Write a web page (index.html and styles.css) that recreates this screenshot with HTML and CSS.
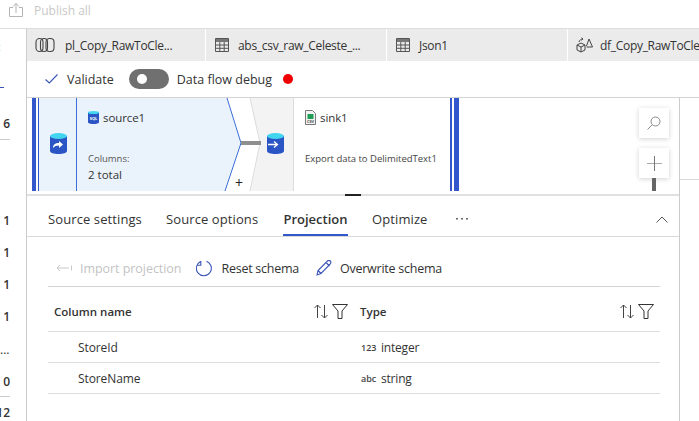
FILE: index.html
```html
<!DOCTYPE html>
<html lang="en">
<head>
<meta charset="UTF-8" />
<meta name="viewport" content="width=device-width, initial-scale=1.0" />
<title>Data flow</title>
<link rel="stylesheet" href="styles.css">
</head>
<body>

<header class="topbar">
  <svg class="publish-icon" width="16" height="16" viewBox="0 0 16 16" fill="none" stroke="#b5b5b5">
    <path d="M5 5.500H1.500v9h13v-9H11M8 11V1.500M5 4.500l3-3 3 3"/>
  </svg>
  <span class="publish-label">Publish all</span>
</header>

<div class="layout">
  <aside class="rail">
    <div class="rail-x">×</div>
    <div class="rail-dash"><i></i></div>
    <div class="rail-six">6</div>
    <div class="rail-gap"></div>
    <div class="rail-num">1</div>
    <div class="rail-num">1</div>
    <div class="rail-num">1</div>
    <div class="rail-num">1</div>
    <div class="rail-dots">...</div>
    <div class="rail-zero">0</div>
    <div class="rail-num rail-cut">12</div>
  </aside>

  <div class="main">
    <nav class="tabs">
      <div class="tab tab-first">
        <svg class="tab-icon" width="20" height="16" viewBox="0 0 20 16" fill="none" stroke="#444" stroke-width="1.100">
          <rect x="1" y="1.500" width="7" height="13" rx="3.500"/>
          <rect x="5.500" y="1.500" width="7" height="13" rx="3.500"/>
          <rect x="11" y="1.500" width="8" height="13" rx="3.500"/>
        </svg>
        <span>pl_Copy_RawToCle...</span>
      </div>
      <div class="tab">
        <svg class="tab-icon" width="14" height="14" viewBox="0 0 14 14" fill="none" stroke="#555">
          <path d="M.5.500h13v13H.5z"/>
          <path fill="#777" stroke="none" d="M1 1h12v3H1z"/>
          <path d="M.5 7h13M.5 10.300h13M4.800 4v9.500M9.200 4v9.500"/>
        </svg>
        <span>abs_csv_raw_Celeste_...</span>
      </div>
      <div class="tab">
        <svg class="tab-icon" width="14" height="14" viewBox="0 0 14 14" fill="none" stroke="#555">
          <path d="M.5.500h13v13H.5z"/>
          <path fill="#777" stroke="none" d="M1 1h12v3H1z"/>
          <path d="M.5 7h13M.5 10.300h13M4.800 4v9.500M9.200 4v9.500"/>
        </svg>
        <span>Json1</span>
      </div>
      <div class="tab tab-last">
        <svg class="tab-icon" width="17" height="16" viewBox="0 0 17 16" fill="none" stroke="#444">
          <path d="M1 8l4-2 4 2v5l-4 2-4-2zM1 8l4 2 4-2M5 10v5"/>
          <path d="M10.500 9L13 2l3.500 8h-6"/>
          <path d="M3 5c.5-2 2-3 4-3M7 2L5.500.8M7 2L5.500 3.300"/>
        </svg>
        <span>df_Copy_RawToCle...</span>
      </div>
    </nav>

    <div class="toolbar">
      <svg class="check-icon" width="13" height="10" viewBox="0 0 13 10" fill="none" stroke="#3a54b8" stroke-width="1.100">
        <path d="M.5 5.500L4.300 9 12.500.5"/>
      </svg>
      <span class="validate-label">Validate</span>
      <span class="toggle"><i></i></span>
      <span>Data flow debug</span>
      <span class="red-dot"></span>
    </div>

    <div class="workspace">
      <div class="center">
        <section class="canvas">
          <svg class="canvas-bg" width="652" height="93" viewBox="0 0 652 93">
            <rect x="5" y="0" width="4" height="93" fill="#3358cc"/>
            <rect x="11" y="0" width="1" height="93" fill="#3358cc"/>
            <path d="M12 0H200L214 45 198 93H12z" fill="#eaf2fb"/>
            <path d="M200 0L214 45 198 93" fill="none" stroke="#3b6fd8" stroke-width="1"/>
            <rect x="49" y="0" width="1" height="93" fill="#3b6fd8"/>
            <path d="M223 0H266V93H223L233 45z" fill="#f3f3f3"/>
            <path d="M223 0L233 45 223 93" fill="none" stroke="#dcdcdc" stroke-width="1"/>
            <rect x="214" y="43" width="20" height="4" fill="#8f8f8f"/>
            <rect x="266" y="0" width="1" height="93" fill="#dcdcdc"/>
            <rect x="423" y="0" width="2" height="93" fill="#3358cc"/>
            <rect x="427" y="0" width="5" height="93" fill="#3358cc"/>
          </svg>

          <svg class="node-icon source-icon" width="17" height="21" viewBox="0 0 17 21">
            <path d="M0 3v15c0 1.700 3.800 3 8.500 3S17 19.700 17 18V3z" fill="#2b55c4"/>
            <ellipse cx="8.500" cy="3" rx="8.500" ry="3" fill="#41d5f0"/>
            <path d="M3 15c0-3.500 2-5 6-5V8l4 3.500L9 15v-2.500c-3 0-4.500.800-6 2.500z" fill="#fff"/>
          </svg>
          <svg class="node-icon sink-icon" width="17" height="21" viewBox="0 0 17 21">
            <path d="M0 3v15c0 1.700 3.800 3 8.500 3S17 19.700 17 18V3z" fill="#2b55c4"/>
            <ellipse cx="8.500" cy="3" rx="8.500" ry="3" fill="#41d5f0"/>
            <path d="M1 11.500h9M7 8.500l3.500 3-3.500 3" fill="none" stroke="#fff" stroke-width="1.300"/>
          </svg>

          <div class="node source-node">
            <div class="node-title">
              <svg width="11" height="13" viewBox="0 0 11 13">
                <path d="M0 1.500v10c0 .800 2.500 1.500 5.500 1.500s5.500-.700 5.500-1.500v-10z" fill="#2b55c4"/>
                <ellipse cx="5.500" cy="1.500" rx="5.500" ry="1.500" fill="#41d5f0"/>
                <text x="5.500" y="8.500" class="tiny-mark" fill="#fff">SQL</text>
              </svg>
              <span>source1</span>
            </div>
            <div class="node-sub">Columns:</div>
            <div class="node-total">2 total</div>
          </div>
          <span class="add-btn">+</span>

          <div class="node sink-node">
            <div class="node-title">
              <svg width="11" height="15" viewBox="0 0 11 15">
                <path d="M.5.500h7l3 3v11H.5z" fill="#f2f2f2" stroke="#777"/>
                <rect x="2.500" y="4" width="6" height="5" fill="#1f9d55"/>
                <text x="5.500" y="13" class="tiny-mark" fill="#555">CSV</text>
              </svg>
              <span>sink1</span>
            </div>
            <div class="node-sub">Export data to DelimitedText1</div>
          </div>

          <button class="zoom-btn search-btn">
            <svg width="14" height="14" viewBox="0 0 14 14" fill="none" stroke="#888">
              <circle cx="8.500" cy="5.500" r="4.500"/>
              <path d="M5.300 8.700L.5 13.500"/>
            </svg>
          </button>
          <button class="zoom-btn plus-btn">
            <svg width="15" height="15" viewBox="0 0 15 15">
              <path d="M0 7.500h15" stroke="#aaa"/>
              <path d="M7.500 0v15" stroke="#777"/>
            </svg>
          </button>
          <span class="slider-bar"></span>
        </section>

        <div class="sash"><i></i></div>

        <div class="panel-tabs">
          <span class="panel-tab t1">Source settings</span>
          <span class="panel-tab t2">Source options</span>
          <span class="panel-tab active">Projection</span>
          <span class="panel-tab t4">Optimize</span>
          <svg class="panel-more" width="12" height="2" viewBox="0 0 12 2" fill="#666">
            <rect x="0" y="0" width="2" height="1.500"/>
            <rect x="5" y="0" width="2" height="1.500"/>
            <rect x="10" y="0" width="2" height="1.500"/>
          </svg>
          <svg class="collapse" width="12" height="7" viewBox="0 0 12 7" fill="none" stroke="#555">
            <path d="M.5 6.500L6 1l5.500 5.500"/>
          </svg>
        </div>

        <div class="content">
          <div class="actions">
            <span class="action disabled">
              <svg width="16" height="8" viewBox="0 0 16 8" fill="none" stroke="#c8c8c8">
                <path d="M13 4H1M4 1L1 4l3 3M15.500 1.500v5"/>
              </svg>
              Import projection
            </span>
            <span class="action">
              <svg width="17" height="17" viewBox="0 0 17 17" fill="none" stroke="#3a54b8" stroke-width="1.100">
                <path d="M10.500 1.200a7.500 7.500 0 1 1-6 .300M4.800 1v4.200H.8"/>
              </svg>
              Reset schema
            </span>
            <span class="action overwrite">
              <svg width="16" height="16" viewBox="0 0 16 16" fill="none" stroke="#3a54b8" stroke-width="1.100">
                <path d="M1 15l1-4.500L11.500 1c.8-.8 2-.8 2.800 0s.8 2 0 2.800L5 13.500zM2 10.500L5 13.500M10 2.500l3.500 3.500"/>
              </svg>
              Overwrite schema
            </span>
          </div>

          <div class="schema">
            <div class="schema-head">
              <div class="head-cell">
                <span>Column name</span>
                <span class="head-icons">
                  <svg width="14" height="15" viewBox="0 0 14 15" fill="none" stroke="#444"><path d="M3.500 14V1M.5 4l3-3 3 3M10.500 1v13M7.500 11l3 3 3-3"/></svg>
                  <svg width="16" height="15" viewBox="0 0 16 15" fill="none" stroke="#333"><path d="M.5.500h15L10 7v7.500H6V7z"/></svg>
                </span>
              </div>
              <div class="head-cell">
                <span>Type</span>
                <span class="head-icons">
                  <svg width="14" height="15" viewBox="0 0 14 15" fill="none" stroke="#444"><path d="M3.500 14V1M.5 4l3-3 3 3M10.500 1v13M7.500 11l3 3 3-3"/></svg>
                  <svg width="16" height="15" viewBox="0 0 16 15" fill="none" stroke="#333"><path d="M.5.500h15L10 7v7.500H6V7z"/></svg>
                </span>
              </div>
            </div>
            <div class="schema-row">
              <div class="name-cell">StoreId</div>
              <div class="type-cell"><span class="type-mark">123</span>integer</div>
            </div>
            <div class="schema-row">
              <div class="name-cell">StoreName</div>
              <div class="type-cell"><span class="type-mark">abc</span>string</div>
            </div>
          </div>
        </div>
      </div>

      <aside class="side"><div class="side-top"></div></aside>
    </div>
  </div>
</div>

</body>
</html>
```

FILE: styles.css
```css
* {
  box-sizing: border-box;
}
html, body {
  margin: 0;
  height: 421px;
  overflow: hidden;
}
body {
  font-family: "Open Sans", "Noto Sans", sans-serif;
  font-size: 12.5px;
  color: #333;
  background: #fff;
}

.topbar {
  height: 29px;
  border-bottom: 1px solid #ddd;
  display: flex;
  align-items: flex-start;
  padding: 2px 0 0 8px;
}
.publish-label {
  margin: 1px 0 0 10px;
  color: #c8c8c8;
  font-size: 12px;
  line-height: 16px;
}

.layout {
  display: flex;
  height: 392px;
}

/* left rail */
.rail {
  width: 27px;
  flex: none;
  border-right: 1px solid #ccc;
  overflow: hidden;
  font-weight: 600;
  font-size: 12px;
}
.rail-x {
  height: 38px;
  line-height: 38px;
  margin-left: -7px;
  font-weight: 400;
  font-size: 14px;
}
.rail-dash {
  height: 41px;
  padding-top: 20px;
}
.rail-dash i {
  display: block;
  width: 4px;
  height: 1px;
  background: #3a54b8;
}
.rail-six {
  height: 32px;
  width: 10px;
  line-height: 32px;
  text-align: right;
  border-bottom: 1px solid #ccc;
}
.rail-gap {
  height: 65px;
}
.rail-num {
  height: 32px;
  line-height: 32px;
  width: 10px;
  text-align: right;
}
.rail-dots {
  height: 35px;
  padding-top: 8px;
  font-weight: 400;
}
.rail-zero {
  height: 29px;
  width: 10px;
  line-height: 27px;
  text-align: right;
  border-bottom: 1px solid #ccc;
}
.rail-cut {
  width: 10px;
  direction: rtl;
  line-height: 32px;
}

/* tabs and toolbar */
.main {
  flex: 1;
  min-width: 0;
  display: flex;
  flex-direction: column;
}
.tabs {
  display: flex;
  height: 32px;
  background: #ebebeb;
  flex: none;
  overflow: hidden;
}
.tab {
  width: 181px;
  flex: none;
  display: flex;
  align-items: center;
  padding-left: 9px;
  border-right: 1px solid #fff;
  white-space: nowrap;
  color: #333;
  font-size: 12px;
  letter-spacing: -.3px;
}
.tab span {
  margin-left: 9px;
}
.tab-first {
  width: 179px;
  padding-left: 8px;
}
.tab-first span {
  margin-left: 10px;
}
.tab-last {
  padding-left: 8px;
  border-right: 0;
}
.tab-last span {
  margin-left: 7px;
}

.toolbar {
  height: 37px;
  flex: none;
  display: flex;
  align-items: center;
  padding-left: 18px;
  border-bottom: 1px solid #d4d4d4;
}
.validate-label {
  margin-left: 9px;
}
.toggle {
  width: 40px;
  height: 20px;
  margin: 0 8px 0 15px;
  border-radius: 10px;
  background: #707070;
  position: relative;
}
.toggle i {
  position: absolute;
  left: 8px;
  top: 5px;
  width: 10px;
  height: 10px;
  border-radius: 50%;
  background: #fff;
}
.red-dot {
  width: 10px;
  height: 10px;
  margin-left: 11px;
  border-radius: 50%;
  background: #f00000;
}

.workspace {
  flex: 1;
  min-height: 0;
  display: flex;
}
.center {
  width: 653px;
  flex: none;
  border-right: 1px solid #ccc;
}
.side {
  flex: 1;
}
.side-top {
  height: 82px;
  border-bottom: 1px solid #d8d8d8;
}

/* canvas */
.canvas {
  position: relative;
  height: 93px;
  overflow: hidden;
}
.canvas-bg {
  position: absolute;
  left: 0;
  top: 0;
}
.node-icon {
  position: absolute;
  top: 35px;
}
.source-icon {
  left: 23px;
}
.sink-icon {
  left: 240px;
}
.node {
  position: absolute;
  top: 11px;
}
.source-node {
  left: 61px;
}
.sink-node {
  left: 278px;
}
.node-title {
  display: flex;
  align-items: center;
  gap: 4px;
  font-size: 11.5px;
  height: 16px;
  letter-spacing: -.1px;
}
.tiny-mark {
  font-size: 4px;
  font-weight: 700;
  text-anchor: middle;
}
.node-sub {
  font-size: 9.5px;
  color: #555;
  margin-top: 27px;
  letter-spacing: -.02px;
}
.sink-node .node-sub {
  color: #444;
}
.node-total {
  font-size: 11.5px;
  font-weight: 500;
  margin-top: 2px;
}
.add-btn {
  position: absolute;
  left: 208px;
  top: 77px;
  font-size: 14px;
  line-height: 16px;
  color: #222;
}
.zoom-btn {
  position: absolute;
  left: 612px;
  width: 30px;
  height: 30px;
  padding: 0;
  border: 0;
  background: #fff;
  box-shadow: 0 1px 5px rgba(0, 0, 0, .18);
  display: flex;
  align-items: center;
  justify-content: center;
}
.search-btn {
  top: 10px;
}
.plus-btn {
  top: 50px;
}
.slider-bar {
  position: absolute;
  left: 625px;
  top: 80px;
  width: 4px;
  height: 13px;
  background: #666;
}

.sash {
  height: 2px;
  margin-top: 3px;
  background: #e0e0e0;
  position: relative;
}
.sash i {
  position: absolute;
  left: 318px;
  top: 0;
  width: 16px;
  height: 2px;
  background: #222;
}

/* bottom panel */
.panel-tabs {
  height: 41px;
  display: flex;
  align-items: center;
  border-bottom: 1px solid #d8d8d8;
  padding-left: 21px;
  position: relative;
}
.panel-tab {
  height: 40px;
  line-height: 46px;
  font-size: 13px;
  letter-spacing: .1px;
  white-space: nowrap;
}
.t1 {
  width: 118px;
}
.t2 {
  width: 117px;
}
.panel-tab.active {
  width: 65px;
  margin-right: 24px;
  text-align: center;
  font-weight: 600;
  letter-spacing: 0;
  border-bottom: 2px solid #3358cc;
}
.t4 {
  width: 84px;
}
.panel-more {
  margin-top: 6px;
}
.collapse {
  position: absolute;
  left: 629px;
  top: 20px;
}

.content {
  padding: 0 19px 0 21px;
}
.actions {
  height: 50px;
  padding-top: 13px;
  display: flex;
  align-items: center;
  gap: 15px;
  padding-left: 8px;
  border-bottom: 1px solid #d4d4d4;
}
.action {
  display: flex;
  align-items: center;
  gap: 8px;
  white-space: nowrap;
  letter-spacing: -.25px;
}
.action.disabled {
  color: #c4c4c4;
  letter-spacing: -.05px;
}
.action.overwrite {
  margin-left: 2px;
}

.schema-head,
.schema-row {
  display: grid;
  grid-template-columns: 306px 1fr;
  border-bottom: 1px solid #ddd;
}
.schema-head {
  height: 45px;
}
.schema-row {
  height: 31px;
  align-items: center;
  font-size: 12px;
}
.head-cell {
  display: flex;
  align-items: center;
  justify-content: space-between;
  padding: 4px 6px 0;
  font-weight: 600;
  font-size: 11.5px;
}
.head-icons {
  display: flex;
  align-items: center;
  gap: 4px;
}
.name-cell {
  padding-left: 30px;
  letter-spacing: -.1px;
}
.type-cell {
  padding-left: 7px;
  display: flex;
  align-items: center;
  letter-spacing: -.2px;
}
.type-mark {
  width: 20px;
  font-size: 9px;
  font-weight: 600;
  letter-spacing: 0;
  color: #444;
}
```
